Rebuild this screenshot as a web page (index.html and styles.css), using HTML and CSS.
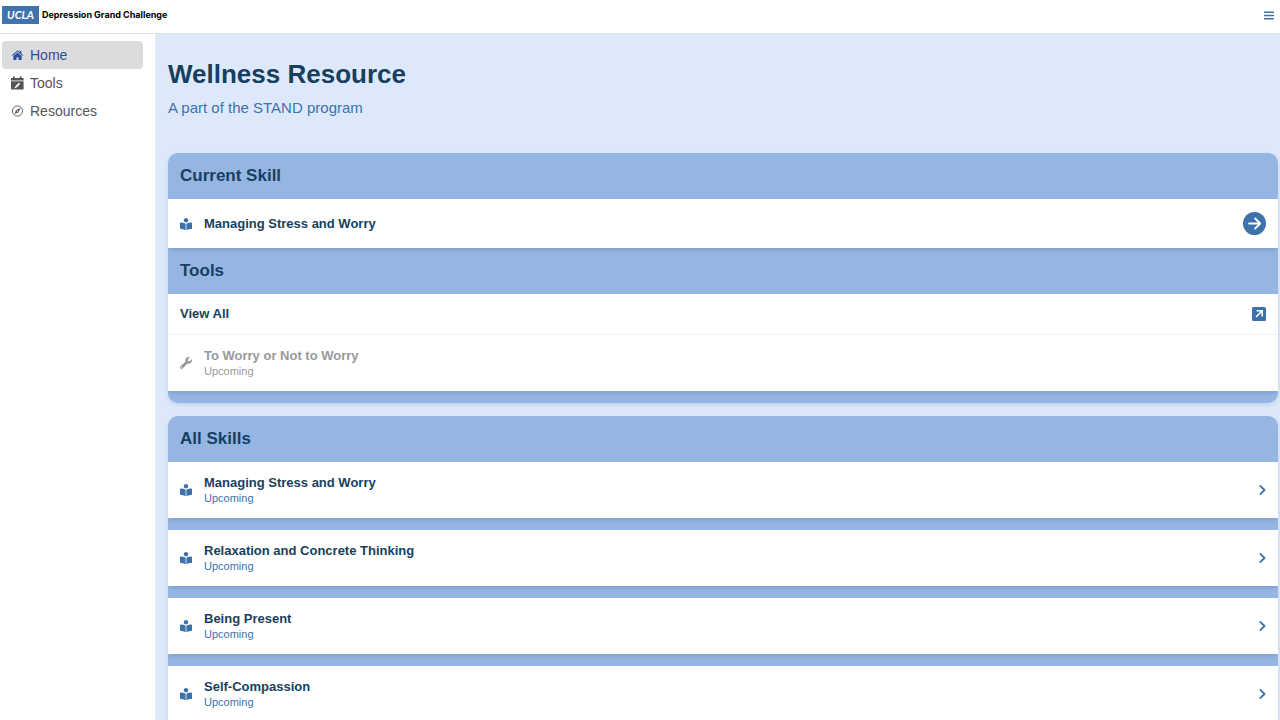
FILE: index.html
```html
<!DOCTYPE html>
<html lang="en">
<head>
<meta charset="utf-8">
<meta name="viewport" content="width=device-width, initial-scale=1">
<title>Wellness Resource</title>
<link rel="stylesheet" href="styles.css">
</head>
<body>
<svg class="sprite" aria-hidden="true">
  <symbol id="reader" viewBox="0 0 512 512"><path d="M352 96c0-53.02-42.98-96-96-96s-96 42.98-96 96 42.98 96 96 96 96-42.98 96-96zM233.59 241.09c-59.33-36.32-155.43-46.3-203.79-49.05C13.55 191.13 0 203.51 0 219.14v222.8c0 14.33 11.59 26.28 26.49 27.05 43.66 2.29 131.99 10.68 193.04 41.43 9.37 4.72 20.48-1.71 20.48-11.87V252.56c-.01-4.67-2.32-8.95-6.42-11.47zm248.61-49.05c-48.35 2.74-144.46 12.73-203.78 49.05-4.1 2.51-6.41 6.96-6.41 11.63v245.79c0 10.19 11.14 16.63 20.54 11.9 61.04-30.72 149.32-39.11 192.97-41.4 14.9-.78 26.49-12.73 26.49-27.06V219.14c-.01-15.63-13.56-28.01-29.81-27.1z"/></symbol>
  <symbol id="wrench" viewBox="0 0 512 512"><path d="M507.73 109.1c-2.24-9.03-13.54-12.09-20.12-5.51l-74.36 74.36-67.88-11.31-11.31-67.88 74.36-74.36c6.62-6.62 3.43-17.9-5.66-20.16-47.38-11.74-99.55.91-136.58 37.93-39.64 39.64-50.55 97.1-34.05 147.2L18.74 402.76c-24.99 24.99-24.99 65.51 0 90.5 24.99 24.99 65.51 24.99 90.5 0l213.21-213.21c50.12 16.71 107.47 5.68 147.37-34.22 37.07-37.07 49.7-89.32 37.91-136.73zM64 472c-13.25 0-24-10.75-24-24 0-13.26 10.75-24 24-24s24 10.74 24 24c0 13.25-10.75 24-24 24z"/></symbol>
  <symbol id="chevron" viewBox="0 0 12 12"><path d="M4.300 1.800l4.200 4.200-4.200 4.200" fill="none" stroke="currentColor" stroke-width="1.800" stroke-linecap="round" stroke-linejoin="round"/></symbol>
</svg>

<header class="topbar">
  <a class="brand" href="#"><span class="brand-mark">UCLA</span><span class="brand-name">Depression Grand Challenge</span></a>
  <button class="menu-button" type="button" aria-label="Menu">
    <svg class="menu-icon" viewBox="0 0 10 9"><path d="M.6 1.200h8.800M.6 4.500h8.800M.6 7.800h8.800" stroke="currentColor" stroke-width="1.400" stroke-linecap="round"/></svg>
  </button>
</header>

<div class="shell">
  <nav class="sidebar" aria-label="Main">
    <a class="nav-link active" href="#" aria-current="page">
      <svg class="nav-icon" viewBox="0 0 14 14"><path fill="currentColor" d="M7.500 2.200L1.800 7.200l.6.700 5.100-4.400 5.100 4.400.6-.7-1.900-1.700V2.700H9.800v1.500zM7.500 4.500L3.400 8v4h3.100V9.200h2V12h3.100V8z"/></svg>Home</a>
    <a class="nav-link" href="#">
      <svg class="nav-icon" viewBox="0 0 14 14"><path fill="currentColor" d="M3 .5h1.800V2h5V.5h1.800V2h2v2.500H1V2h2zM1 5.200h12.600v8.300H1z"/><path d="M6 10.900l3.500-3.500" stroke="#fff" stroke-width="2"/><path d="M4.700 12.200l.4-2 1.600 1.600z" fill="#fff"/></svg>Tools</a>
    <a class="nav-link" href="#">
      <svg class="nav-icon" viewBox="0 0 14 14"><circle cx="7.500" cy="7" r="5.100" fill="none" stroke="currentColor" stroke-width=".9"/><path fill="currentColor" fill-rule="evenodd" d="M10.600 3.900L8.700 8.200 4.400 10.100l1.900-4.300zM7.500 6.200a.8.8 0 1 0 0 1.600.8.8 0 0 0 0-1.600z"/></svg>Resources</a>
  </nav>

  <main class="content">
    <h1 class="page-title">Wellness Resource</h1>
    <p class="page-subtitle">A part of the STAND program</p>

    <section class="card card-current">
      <h2 class="card-heading">Current Skill</h2>
      <a class="row row-current" href="#">
        <svg class="row-icon"><use href="#reader"/></svg>
        <span class="row-title">Managing Stress and Worry</span>
        <svg class="go-icon" viewBox="0 0 24 24"><circle cx="12" cy="12" r="12" fill="currentColor"/><path d="M6.300 12h11M12.600 6.700l5.300 5.300-5.300 5.300" fill="none" stroke="#fff" stroke-width="2" stroke-linecap="round" stroke-linejoin="round"/></svg>
      </a>
      <h2 class="card-heading">Tools</h2>
      <div class="row-group">
        <a class="row row-all" href="#">
          <span class="row-title">View All</span>
          <svg class="open-icon" viewBox="0 0 14 14"><rect width="14" height="14" rx="1.500" fill="currentColor"/><path d="M4 10l5.500-5.500M4.600 3.800h5.600v5.600" fill="none" stroke="#fff" stroke-width="1.500"/></svg>
        </a>
        <div class="row row-disabled">
          <svg class="row-icon"><use href="#wrench"/></svg>
          <span class="row-text"><span class="row-title">To Worry or Not to Worry</span><span class="row-status">Upcoming</span></span>
        </div>
      </div>
    </section>

    <section class="card">
      <h2 class="card-heading">All Skills</h2>
      <div class="skill-list">
        <a class="row" href="#">
          <svg class="row-icon"><use href="#reader"/></svg>
          <span class="row-text"><span class="row-title">Managing Stress and Worry</span><span class="row-status">Upcoming</span></span>
          <svg class="chevron"><use href="#chevron"/></svg>
        </a>
        <a class="row" href="#">
          <svg class="row-icon"><use href="#reader"/></svg>
          <span class="row-text"><span class="row-title">Relaxation and Concrete Thinking</span><span class="row-status">Upcoming</span></span>
          <svg class="chevron"><use href="#chevron"/></svg>
        </a>
        <a class="row" href="#">
          <svg class="row-icon"><use href="#reader"/></svg>
          <span class="row-text"><span class="row-title">Being Present</span><span class="row-status">Upcoming</span></span>
          <svg class="chevron"><use href="#chevron"/></svg>
        </a>
        <a class="row" href="#">
          <svg class="row-icon"><use href="#reader"/></svg>
          <span class="row-text"><span class="row-title">Self-Compassion</span><span class="row-status">Upcoming</span></span>
          <svg class="chevron"><use href="#chevron"/></svg>
        </a>
      </div>
    </section>
  </main>
</div>
</body>
</html>
```

FILE: styles.css
```css
* { box-sizing: border-box; }
html { height: 100%; }
body {
  margin: 0;
  height: 100%;
  display: flex;
  flex-direction: column;
  overflow: hidden;
  font-family: "Liberation Sans", Arial, sans-serif;
  color: #173f60;
  background: #fff;
}
a { color: inherit; text-decoration: none; }
h1, h2, p { margin: 0; }
svg { display: block; flex: none; }
.sprite { position: absolute; width: 0; height: 0; }

.topbar {
  flex: none;
  display: flex;
  align-items: center;
  justify-content: space-between;
  height: 34px;
  padding: 0 6px 3px 2px;
  border-bottom: 1px solid #dfe3e8;
}
.brand { display: flex; align-items: center; gap: 3px; }
.brand-mark {
  width: 37px;
  text-align: center;
  background: #3f74ae;
  color: #fff;
  font: italic 700 11px/18px Lato, sans-serif;
}
.brand-name { font: 700 9px/18px Inter, sans-serif; color: #000; }
.menu-button { padding: 0; border: 0; background: none; color: #3d72ac; }
.menu-icon { width: 10px; height: 9px; }

.shell { flex: 1; min-height: 0; display: flex; }
.sidebar {
  flex: none;
  width: 156px;
  padding: 7px 12px 0 2px;
  border-right: 1px solid #e8edf4;
}
.nav-link {
  display: flex;
  align-items: center;
  gap: 6px;
  height: 28px;
  padding-left: 8px;
  border-radius: 4px;
  font-size: 14px;
  color: #555;
}
.nav-link.active { background: #dcdcdc; color: #274f9f; }
.nav-icon { width: 14px; height: 14px; }

.content {
  flex: 1;
  min-width: 0;
  overflow-y: auto;
  scrollbar-width: none;
  padding: 23px 2px 24px 12px;
  background: #dde9fb;
}
.page-title { font-size: 26px; line-height: 34px; }
.page-subtitle { margin-top: 7px; font-size: 15px; line-height: 20px; color: #3d72ac; }

.card {
  margin-top: 12px;
  padding-bottom: 12px;
  overflow: hidden;
  border-radius: 10px;
  background: #95b6e3;
  box-shadow: 0 2px 4px rgba(40, 80, 140, .15);
}
.card-current { margin-top: 35px; }
.card-heading { padding: 12px; font-size: 17px; line-height: 22px; }
.row {
  display: flex;
  align-items: center;
  height: 56px;
  padding: 0 12px;
  gap: 12px;
  background: #fff;
  color: #3d72ac;
}
.row-current, .row-group, .skill-list .row { box-shadow: 0 3px 4px -1px rgba(30, 60, 110, .18); }
.row-current { height: 49px; }
.row-all { height: 41px; border-bottom: 1px solid #eff0f2; }
.row-icon { width: 12px; height: 12px; fill: currentColor; }
.row-text { display: flex; flex-direction: column; }
.row-title { font-size: 13px; line-height: 16px; font-weight: 700; color: #173f60; }
.row-status { font-size: 11px; line-height: 15px; }
.row-disabled, .row-disabled .row-title { color: #999; }
.go-icon, .open-icon, .chevron { margin-left: auto; }
.go-icon { width: 23px; height: 23px; }
.open-icon { width: 14px; height: 14px; }
.chevron { width: 12px; height: 12px; margin-right: -2px; }
.skill-list { display: grid; gap: 12px; }
.card-current + .card { margin-top: 13px; }
```
